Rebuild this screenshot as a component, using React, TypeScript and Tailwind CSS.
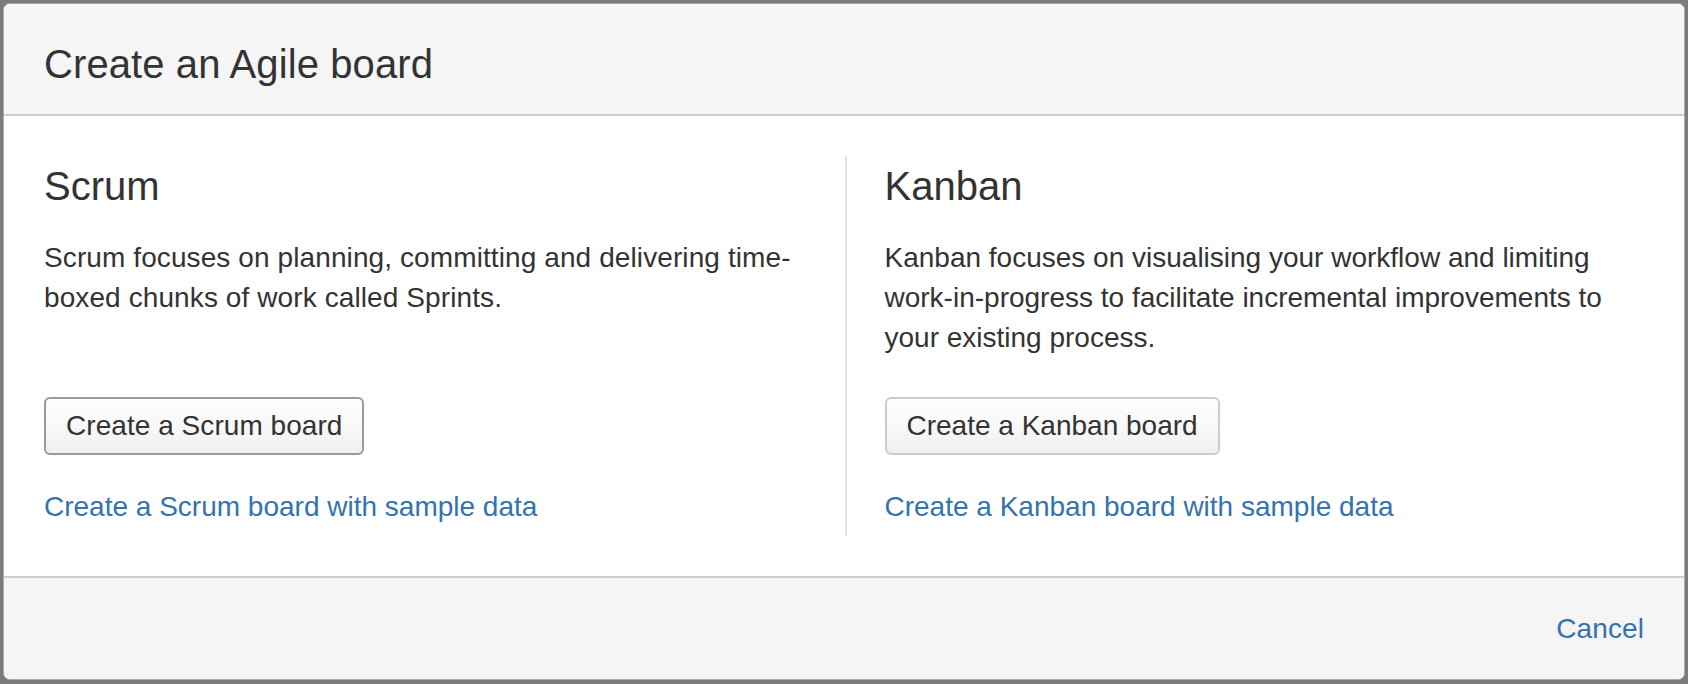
import React from "react";

export default function App() {
  return (
    <div
      className="w-[1688px] h-[684px] bg-[#7b7b7b] pt-[3px] pl-[3px] pr-[3px] pb-[4px]"
      style={{ fontFamily: '"Liberation Sans", Arial, sans-serif' }}
    >
      <div className="h-full w-full flex flex-col rounded-[7px] border border-[#a9a9a9] bg-white overflow-hidden text-[#333333]">
        {/* Header */}
        <div className="bg-[#f5f5f5] border-b-2 border-[#cccccc] px-[40px] pt-[36px] pb-[26px]">
          <h2 className="text-[40px] leading-[48px] font-normal tracking-[0.1px]">Create an Agile board</h2>
        </div>

        {/* Body */}
        <div className="flex-1 bg-white pl-[40px] pr-[39px] pt-[40px] pb-[40px]">
          <div className="flex h-full">
            <div className="w-1/2 pr-[40px] flex flex-col">
              <h3 className="mt-[6px] text-[40px] leading-[48px] font-normal">Scrum</h3>
              <p className="mt-[28px] h-[120px] text-[28px] leading-[40px] tracking-[0.1px]">
                Scrum focuses on planning, committing and delivering time-
                <br />
                boxed chunks of work called Sprints.
              </p>
              <div className="mt-[39px]">
                <button className="h-[58px] px-[20px] rounded-[6px] border-2 border-[#9a9a9a] bg-gradient-to-b from-white to-[#f0f0f0] text-[28px] leading-[40px] tracking-[0.05px] text-[#333333]">
                  Create a Scrum board
                </button>
              </div>
              <a className="mt-[32px] text-[28px] leading-[40px] text-[#3572b0] self-start" href="#">
                Create a Scrum board with sample data
              </a>
            </div>
            <div className="w-1/2 border-l-2 border-[#e5e5e5] pl-[38px] flex flex-col">
              <h3 className="mt-[6px] text-[40px] leading-[48px] font-normal">Kanban</h3>
              <p className="mt-[28px] h-[120px] text-[28px] leading-[40px]">
                Kanban focuses on visualising your workflow and limiting
                <br />
                work-in-progress to facilitate incremental improvements to
                <br />
                your existing process.
              </p>
              <div className="mt-[39px]">
                <button className="h-[58px] px-[20px] rounded-[6px] border-2 border-[#cccccc] bg-gradient-to-b from-white to-[#f0f0f0] text-[28px] leading-[40px] text-[#333333]">
                  Create a Kanban board
                </button>
              </div>
              <a className="mt-[32px] text-[28px] leading-[40px] text-[#3572b0] self-start" href="#">
                Create a Kanban board with sample data
              </a>
            </div>
          </div>
        </div>

        {/* Footer */}
        <div className="h-[103px] bg-[#f5f5f5] border-t-2 border-[#cccccc] px-[40px] flex items-center justify-end">
          <a className="text-[28px] leading-[40px] tracking-[0.1px] text-[#3572b0]" href="#">
            Cancel
          </a>
        </div>
      </div>
    </div>
  );
}
